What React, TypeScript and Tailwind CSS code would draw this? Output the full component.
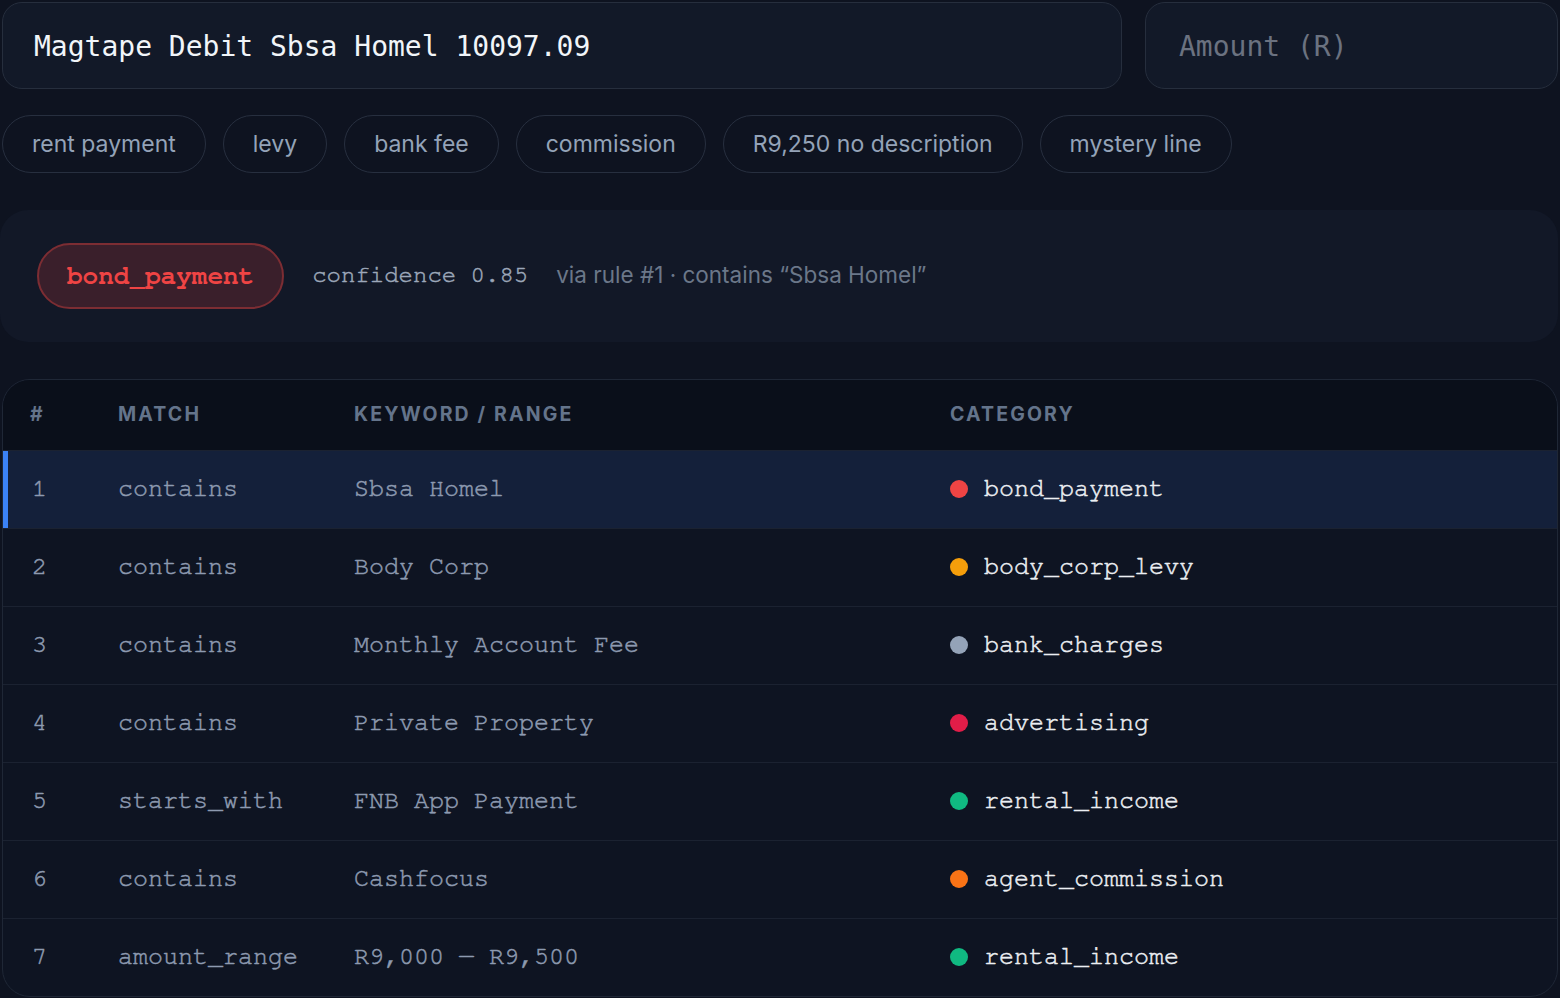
import { useState } from 'react';

type Rule = {
  id: number;
  match: string;
  keyword: string;
  category: string;
  dot: string;
};

const rules: Rule[] = [
  { id: 1, match: 'contains', keyword: 'Sbsa Homel', category: 'bond_payment', dot: 'bg-[#ef4444]' },
  { id: 2, match: 'contains', keyword: 'Body Corp', category: 'body_corp_levy', dot: 'bg-[#f59e0b]' },
  { id: 3, match: 'contains', keyword: 'Monthly Account Fee', category: 'bank_charges', dot: 'bg-[#94a3b8]' },
  { id: 4, match: 'contains', keyword: 'Private Property', category: 'advertising', dot: 'bg-[#e11d48]' },
  { id: 5, match: 'starts_with', keyword: 'FNB App Payment', category: 'rental_income', dot: 'bg-[#10b981]' },
  { id: 6, match: 'contains', keyword: 'Cashfocus', category: 'agent_commission', dot: 'bg-[#f97316]' },
  { id: 7, match: 'amount_range', keyword: 'R9,000 — R9,500', category: 'rental_income', dot: 'bg-[#10b981]' },
];

const samples = ['rent payment', 'levy', 'bank fee', 'commission', 'R9,250 no description', 'mystery line'];

const mono = "font-['Nimbus_Mono_PS','FreeMono','Courier','Liberation_Mono',monospace]";
const sans = "font-['Inter','Noto_Sans',sans-serif]";

export default function App() {
  const [description, setDescription] = useState('Magtape Debit Sbsa Homel 10097.09');
  const [amount, setAmount] = useState('');

  return (
    <div className={`min-h-screen bg-[#0e1320] ${sans}`}>
      <div className="flex w-[1558px] flex-col pl-[2px] pt-[2px]">
        <div className="flex gap-[23px]">
          <input
            className="h-[87px] w-[1120px] shrink-0 rounded-[20px] border border-[#262e3d] bg-[#121928] px-[31px] pt-[2px] font-['DejaVu_Sans_Mono',monospace] text-[28px] text-[#f1f5f9] outline-none"
            value={description}
            onChange={(e) => setDescription(e.target.value)}
          />
          <input
            className="h-[87px] min-w-0 flex-1 rounded-[20px] border border-[#262e3d] bg-[#121928] px-[33px] pt-[2px] font-['DejaVu_Sans_Mono',monospace] text-[28px] text-[#f1f5f9] outline-none placeholder:text-[#6b7280]"
            placeholder="Amount (R)"
            value={amount}
            onChange={(e) => setAmount(e.target.value)}
          />
        </div>

        <div className="mt-[26px] flex gap-[17px]">
          {samples.map((s) => (
            <button
              className="h-[58px] rounded-full border border-[#272f3f] px-[29px] text-[23px] text-[#94a3b8]"
              key={s}
              onClick={() => setDescription(s)}
              type="button"
            >
              {s}
            </button>
          ))}
        </div>

        <div className="-ml-[2px] mt-[37px] flex h-[132px] items-center rounded-[28px] bg-[#121827] pl-[37px]">
          <span
            className={`flex h-[66px] items-center rounded-full border-2 border-[#7c2d33] bg-[#3a1f2b] px-[28px] text-[26px] font-bold text-[#ef4444] ${mono}`}
          >
            bond_payment
          </span>
          <span className={`ml-[28px] pb-[2px] text-[24px] text-[#9ca7b9] [-webkit-text-stroke:0.5px_currentColor] ${mono}`}>
            confidence 0.85
          </span>
          <span className="ml-[28px] pb-[2px] text-[22.5px] text-[#6b7789]">via rule #1 · contains “Sbsa Homel”</span>
        </div>

        <div className="mt-[37px] overflow-hidden rounded-[28px] border border-[#1f2736] bg-[#0e1422]">
          <div className="grid h-[70px] grid-cols-[88px_236px_596px_1fr] items-center bg-[#0a0f1a] pl-[27px] text-[19.5px] font-bold uppercase tracking-[0.11em] text-[#64748b]">
            <span>#</span>
            <span>Match</span>
            <span>Keyword / Range</span>
            <span>Category</span>
          </div>
          {rules.map((r) => (
            <div
              className={`grid h-[78px] grid-cols-[88px_236px_596px_1fr] items-center border-t border-[#1b2231] pb-[2px] pl-[27px] text-[25px] [-webkit-text-stroke:0.5px_currentColor] ${mono} ${
                r.id === 1 ? 'bg-[#14203a] shadow-[inset_5px_0_0_#3b82f6]' : ''
              }`}
              key={r.id}
            >
              <span className="pl-[2px] text-[#8d9ab0]">{r.id}</span>
              <span className="text-[#8d9ab0]">{r.match}</span>
              <span className="text-[#8d9ab0]">{r.keyword}</span>
              <span className="flex items-center gap-[16px] text-[#eceff3]">
                <span className={`h-[18px] w-[18px] rounded-full ${r.dot}`} />
                {r.category}
              </span>
            </div>
          ))}
        </div>
      </div>
    </div>
  );
}
